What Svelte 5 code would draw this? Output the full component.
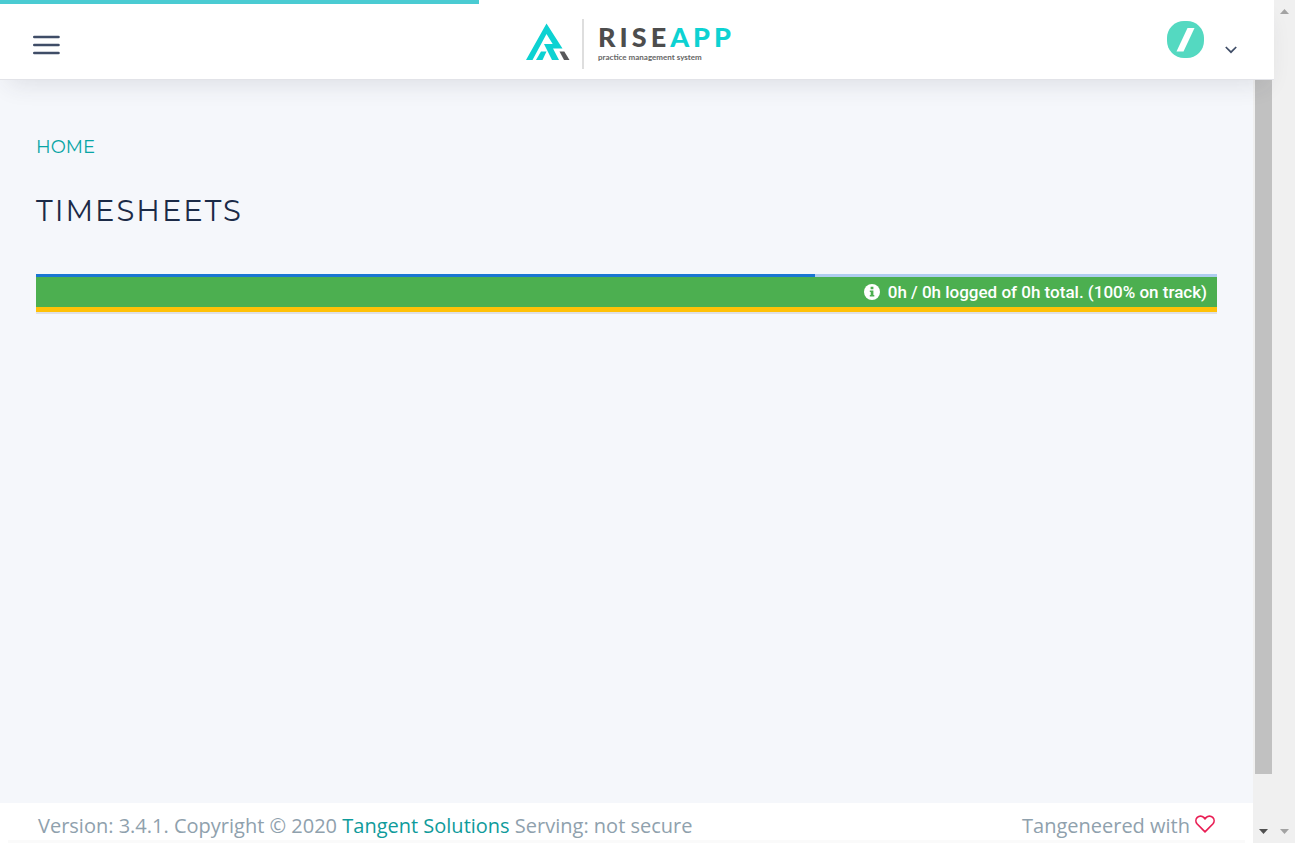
<script>
  const version = '3.4.1';
  const loading = 37;
  const fetching = 66;
  const hours = { logged: 0, due: 0, total: 0, track: 100 };
</script>

<div class="window">
  <div class="app">
    <header>
      <button class="menu" aria-label="Open menu">
        <svg width="28" height="20" viewBox="0 0 28 20" fill="none" stroke="#3f4d67" stroke-width="2.6" stroke-linecap="round">
          <path d="M2.300 2H26.500M2.300 10H26.500M2.300 18H26.500" />
        </svg>
      </button>

      <a class="logo" href="#home" aria-label="Riseapp">
        <svg class="mark" width="44" height="38" viewBox="0 0 44 38">
          <path fill="#0dd2d2" d="M0 37L20.500 0.500L36.500 25.500H27L33 37H26L18 21H26.700L20.500 11L6.500 37Z" />
          <path fill="#0dd2d2" d="M10 37L15 28.500H20.500L16.500 37Z" />
          <path fill="#58585a" d="M33.500 28.500H38.300L43.500 37H38Z" />
        </svg>
        <span class="divider"></span>
        <span class="words">
          <span class="name">RISE<b>APP</b></span>
          <span class="tagline">practice management system</span>
        </span>
      </a>

      <button class="account" aria-label="Account">
        <svg class="avatar" width="37" height="37" viewBox="0 0 37 37">
          <rect width="37" height="37" rx="17" fill="#54d9c1" />
          <path d="M20.500 7H27.500L16.500 30.500H9.500Z" fill="#fff" />
        </svg>
        <svg class="chevron" width="12" height="8" viewBox="0 0 12 8" fill="none" stroke="#3f4d67" stroke-width="1.7">
          <path d="M0.800 1L6 6.200L11.200 1" />
        </svg>
      </button>
    </header>

    <div class="pane">
      <div class="page">
        <main>
          <a class="crumb" href="#home">HOME</a>
          <h1>TIMESHEETS</h1>
          <section class="tracker">
            <div class="fetch"><div style="width: {fetching}%"></div></div>
            <div class="status">
              <svg width="16" height="16" viewBox="0 0 16 16">
                <circle cx="8" cy="8" r="8" fill="#fff" />
                <path fill="#4caf50" d="M6.600 2.700H9.400V5.200H6.600ZM5.800 6.400H9.400V11H10.300V12.600H5.800V11H6.700V8H5.800Z" />
              </svg>
              <span>{hours.logged}h / {hours.due}h logged of {hours.total}h total. ({hours.track}% on track)</span>
            </div>
            <div class="target"></div>
          </section>
        </main>

        <footer>
          <span>Version: {version}. Copyright © 2020 <a href="#tangent">Tangent Solutions</a> Serving: not secure</span>
          <span class="made">Tangeneered with
            <svg width="20" height="18" viewBox="0 0 20 18" fill="none" stroke="#e91e54" stroke-width="1.700" stroke-linejoin="round">
              <path d="M10 16.800L2.200 9C0.500 7.200 0.500 4.200 2.300 2.400C4.100 0.600 7 0.600 8.700 2.400L10 3.800L11.300 2.400C13 0.600 15.900 0.600 17.700 2.400C19.500 4.200 19.500 7.200 17.800 9Z" />
            </svg>
          </span>
        </footer>
      </div>
      <div class="scroll inner" aria-hidden="true">
        <div class="thumb"></div>
        <svg width="9" height="5" viewBox="0 0 9 5"><path d="M0 0H9L4.500 5Z" fill="#505050" /></svg>
      </div>
    </div>
  </div>

  <div class="scroll outer" aria-hidden="true">
    <svg width="9" height="5" viewBox="0 0 9 5"><path d="M0 5H9L4.500 0Z" fill="#a3a3a3" /></svg>
    <svg width="9" height="5" viewBox="0 0 9 5"><path d="M0 0H9L4.500 5Z" fill="#a3a3a3" /></svg>
  </div>

  <div class="loading" style="width: {loading}%"></div>
</div>

<style>
  .window {
    position: relative;
    display: flex;
    height: 100vh;
    overflow: hidden;
    font-family: 'Open Sans', sans-serif;
  }
  .loading {
    position: absolute;
    top: 0;
    left: 0;
    height: 4px;
    background: #4acbd2;
    z-index: 3;
  }
  .app {
    flex: 1;
    min-width: 0;
    display: flex;
    flex-direction: column;
  }
  header {
    position: relative;
    z-index: 2;
    box-sizing: border-box;
    height: 80px;
    padding: 0 37px 0 32px;
    display: grid;
    grid-template-columns: 1fr auto 1fr;
    align-items: center;
    background: #fff;
    border-bottom: 1px solid #e2e3e8;
    box-shadow: 0 12px 24px -8px rgba(50, 50, 65, 0.12);
  }
  button {
    border: 0;
    padding: 0;
    background: none;
    cursor: pointer;
  }
  svg {
    display: block;
    flex: none;
  }
  .menu {
    justify-self: start;
    padding-top: 10px;
  }
  .logo {
    display: flex;
    align-items: center;
    padding: 8px 8px 0 0;
    text-decoration: none;
  }
  .mark {
    margin-bottom: 4px;
  }
  .divider {
    width: 2px;
    height: 50px;
    margin: 0 14px 0 12px;
    background: #dedede;
  }
  .words {
    align-self: flex-start;
    padding-top: 1px;
    display: flex;
    flex-direction: column;
    font-family: Lato, sans-serif;
    color: #4d4d4d;
  }
  .name {
    font-size: 27px;
    line-height: 33px;
    font-weight: 900;
    letter-spacing: 4px;
  }
  .name b {
    font-weight: 900;
    color: #0dd2d2;
  }
  .tagline {
    font-size: 8px;
    line-height: 8px;
    font-weight: 700;
    color: #666;
  }
  .account {
    justify-self: end;
    display: flex;
    align-items: center;
    gap: 21px;
  }
  .chevron {
    margin-top: 20px;
  }
  .pane {
    flex: 1;
    min-height: 0;
    display: flex;
  }
  .page {
    flex: 1;
    min-width: 0;
    display: flex;
    flex-direction: column;
    background: #f5f7fb;
  }
  main {
    flex: 1;
    padding: 54px 36px 0;
    font-family: Montserrat, Inter, sans-serif;
  }
  a {
    color: #0f9b9b;
    text-decoration: none;
  }
  .crumb {
    display: block;
    font-size: 18px;
    line-height: 26px;
    font-weight: 400;
    color: #08a5a5;
  }
  h1 {
    margin: 31px 0 43px;
    font-size: 29px;
    line-height: 40px;
    font-weight: 400;
    letter-spacing: 2px;
    color: #1b2a47;
  }
  .fetch {
    height: 3px;
    background: #afcdef;
  }
  .fetch div {
    height: 100%;
    background: #1976d2;
  }
  .status {
    height: 30px;
    padding: 0 10px;
    display: flex;
    align-items: center;
    justify-content: flex-end;
    gap: 8px;
    background: #4caf50;
    color: #fff;
    font-family: Roboto, sans-serif;
    font-size: 17px;
    font-weight: 500;
    line-height: 30px;
  }
  .target {
    height: 5px;
    background: #ffc107;
    border-bottom: 2px solid #dfe0e4;
  }
  footer {
    box-sizing: border-box;
    height: 40px;
    padding: 0 38px;
    display: flex;
    justify-content: space-between;
    background: linear-gradient(#fafafa, #fafafa) center bottom / calc(100% - 16px) 3px no-repeat #fff;
    font-size: 20px;
    line-height: 46px;
    color: #8fa1ad;
  }
  .made {
    display: flex;
    gap: 5px;
  }
  .made svg {
    margin-top: 12px;
  }
  .scroll {
    width: 21px;
    flex: none;
    box-sizing: border-box;
    background: #f0f0f0;
    display: flex;
    flex-direction: column;
    align-items: center;
    justify-content: space-between;
  }
  .inner {
    padding-bottom: 9px;
  }
  .outer {
    padding: 9px 0;
  }
  .thumb {
    width: 17px;
    height: 92%;
    background: #c1c1c1;
  }
</style>
